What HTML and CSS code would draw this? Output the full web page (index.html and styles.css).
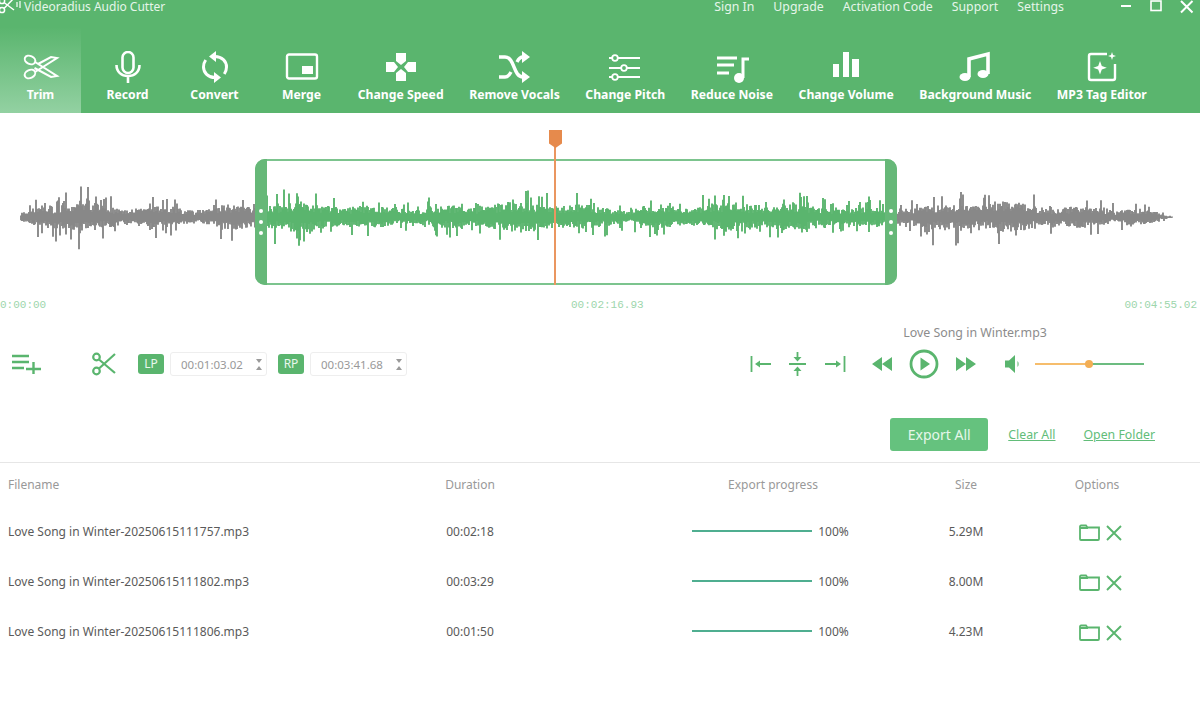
FILE: index.html
```html
<!DOCTYPE html>
<html lang="en">
<head>
  <meta charset="UTF-8">
  <title>Videoradius Audio Cutter</title>
  <link rel="stylesheet" href="styles.css">
</head>
<body>

<header class="header">
  <div class="titlebar">
    <div class="brand">
      <svg class="brand-logo" width="21" height="18" viewBox="0 0 21 18" fill="none" stroke="#fff" stroke-width="1.5">
        <circle cx="2" cy="4" r="2.6"/>
        <circle cx="2" cy="13" r="2.6"/>
        <path d="M4 5.5 14 13M4 11.5 14 1"/>
        <path d="M17 5v5M20 4v7" stroke-width="1.2"/>
      </svg>
      <span>Videoradius Audio Cutter</span>
    </div>
    <nav class="topnav">
      <a>Sign In</a>
      <a>Upgrade</a>
      <a>Activation Code</a>
      <a>Support</a>
      <a>Settings</a>
    </nav>
    <div class="winbtns">
      <svg width="12" height="12" viewBox="0 0 12 12" stroke="#fff" stroke-width="2" fill="none"><path d="M1 6h10"/></svg>
      <svg width="12" height="12" viewBox="0 0 12 12" stroke="#fff" stroke-width="1.6" fill="none"><rect x="1" y="1" width="10" height="9.5"/></svg>
      <svg width="14" height="14" viewBox="0 0 14 14" stroke="#fff" stroke-width="2" fill="none"><path d="M1 1l11.500 11.500M12.500 1 1 12.500"/></svg>
    </div>
  </div>

  <div class="tabs">
    <div class="tab active">
      <svg width="38" height="32" viewBox="0 0 38 32" fill="none" stroke="#fff" stroke-width="2">
        <ellipse cx="8" cy="9" rx="5.500" ry="4" transform="rotate(25 8 9)"/>
        <ellipse cx="8" cy="23" rx="5.500" ry="4" transform="rotate(-25 8 23)"/>
        <path d="M13 11 35 25 29 26 12.500 17M13 21 35 7 29 6 16 13"/>
      </svg>
      <span>Trim</span>
    </div>
    <div class="tab">
      <svg width="38" height="32" viewBox="0 0 38 32" fill="none" stroke="#fff" stroke-width="2.600">
        <rect x="13.500" y="1" width="11" height="21" rx="5.500"/>
        <path d="M7.500 14c0 7 5 11 11.500 11s11.500-4 11.500-11M19 25v7"/>
      </svg>
      <span>Record</span>
    </div>
    <div class="tab">
      <svg width="38" height="32" viewBox="0 0 38 32" fill="none" stroke="#fff" stroke-width="3">
        <path d="M19 5.500c7 0 11.500 5 11.500 10.500 0 2.500-.8 5-2.200 7M19 26.500c-7 0-11.500-5-11.500-10.500 0-2.500.8-5 2.200-7"/>
        <path d="M20 0v11l-7-5.500zM18 21v11l7-5.500z" fill="#fff" stroke="none"/>
      </svg>
      <span>Convert</span>
    </div>
    <div class="tab">
      <svg width="38" height="32" viewBox="0 0 38 32" fill="none" stroke="#fff" stroke-width="2.400">
        <rect x="4" y="3.500" width="30" height="24" rx="2"/>
        <rect x="19" y="15" width="11" height="8" fill="#fff" stroke="none"/>
      </svg>
      <span>Merge</span>
    </div>
    <div class="tab">
      <svg width="38" height="32" viewBox="0 0 38 32" fill="#fff">
        <path d="M14 2h10v8l-5 4-5-4zM14 30h10v-8l-5-4-5 4zM4 11h8l4 5-4 5H4zM34 11h-8l-4 5 4 5h8z"/>
      </svg>
      <span>Change Speed</span>
    </div>
    <div class="tab">
      <svg width="38" height="32" viewBox="0 0 38 32" fill="none" stroke="#fff" stroke-width="3.400">
        <path d="M4 6h6c5 0 7 5 9 10s4 10 9 10h1M4 26h6c3 0 4.500-2 6-5M22 11c1.500-3 3-5 6-5h1"/>
        <path d="M27 0l8 6-8 6zM27 20l8 6-8 6z" fill="#fff" stroke="none"/>
      </svg>
      <span>Remove Vocals</span>
    </div>
    <div class="tab">
      <svg width="38" height="32" viewBox="0 0 38 32" fill="none" stroke="#fff" stroke-width="1.800">
        <path d="M3 7h3M12 7h22M3 17h12M21 17h13M3 26h3M12 26h22"/>
        <circle cx="9" cy="7" r="2.800"/>
        <circle cx="18" cy="17" r="2.800"/>
        <circle cx="9" cy="26" r="2.800"/>
      </svg>
      <span>Change Pitch</span>
    </div>
    <div class="tab">
      <svg width="38" height="32" viewBox="0 0 38 32" fill="none" stroke="#fff" stroke-width="3">
        <path d="M4 7h20M4 14h17M4 22h12M30 27V8h6"/>
        <circle cx="26" cy="27" r="5" fill="#fff" stroke="none"/>
      </svg>
      <span>Reduce Noise</span>
    </div>
    <div class="tab">
      <svg width="38" height="32" viewBox="0 0 38 32" fill="#fff">
        <rect x="6" y="13" width="6" height="13"/>
        <rect x="16" y="1" width="6" height="25"/>
        <rect x="25" y="8" width="7" height="18"/>
      </svg>
      <span>Change Volume</span>
    </div>
    <div class="tab">
      <svg width="38" height="32" viewBox="0 0 38 32" fill="none" stroke="#fff" stroke-width="3.600">
        <path d="M13 26V8l19-5v20"/>
        <ellipse cx="9" cy="26" rx="5.500" ry="4" fill="#fff" stroke="none"/>
        <ellipse cx="27" cy="23" rx="5.500" ry="4" fill="#fff" stroke="none"/>
      </svg>
      <span>Background Music</span>
    </div>
    <div class="tab">
      <svg width="38" height="32" viewBox="0 0 38 32" fill="none" stroke="#fff" stroke-width="2.400">
        <path d="M24 3H8a2 2 0 0 0-2 2v22a2 2 0 0 0 2 2h22a2 2 0 0 0 2-2V13"/>
        <path d="M17 10l1.800 5 5 1.800-5 1.800-1.800 5-1.800-5-5-1.800 5-1.800zM29 1l1 3 3 1-3 1-1 3-1-3-3-1 3-1z" fill="#fff" stroke="none"/>
      </svg>
      <span>MP3 Tag Editor</span>
    </div>
  </div>
</header>

<section class="wave-panel">
  <svg class="wave" id="wave" width="1200" height="180" viewBox="0 0 1200 180"></svg>
  <div class="selection">
    <div class="handle handle-left"><i></i><i></i><i></i></div>
    <div class="handle handle-right"><i></i><i></i><i></i></div>
  </div>
  <div class="playhead"></div>
  <div class="timeline">
    <span>0:00:00</span>
    <span>00:02:16.93</span>
    <span>00:04:55.02</span>
  </div>
</section>

<section class="controls">
  <div class="left-tools">
    <svg class="add-list" width="30" height="20" viewBox="0 0 30 20" fill="none" stroke="#5ab56e" stroke-width="2.400">
      <path d="M0 2h17M0 8h17M0 14h12M14 15h15M21.500 8v12"/>
    </svg>
    <svg class="cut" width="24" height="24" viewBox="0 0 24 24" fill="none" stroke="#5ab56e" stroke-width="2.200">
      <circle cx="4.500" cy="5" r="3.300"/>
      <circle cx="4.500" cy="19" r="3.300"/>
      <path d="M7 7.500 23 21M7 16.500 23 2"/>
    </svg>
    <span class="badge">LP</span>
    <div class="time-input">00:01:03.02<span class="spin"></span></div>
    <span class="badge badge-right">RP</span>
    <div class="time-input">00:03:41.68<span class="spin"></span></div>
  </div>

  <div class="player">
    <div class="song">Love Song in Winter.mp3</div>
    <div class="player-btns">
      <svg width="22" height="18" viewBox="0 0 22 18" fill="none" stroke="#5ab56e" stroke-width="1.800">
        <path d="M1.500 1v16M7 9h14"/><path d="M5 9l5-3.500v7z" fill="#5ab56e" stroke="none"/>
      </svg>
      <svg class="gap-s" width="18" height="26" viewBox="0 0 18 26" fill="none" stroke="#5ab56e" stroke-width="1.800">
        <path d="M0 13h17M8.500 1v6M8.500 19v6"/><path d="M4.500 6h8l-4 4.500zM4.500 20h8l-4-4.500z" fill="#5ab56e" stroke="none"/>
      </svg>
      <svg class="gap-s" width="22" height="18" viewBox="0 0 22 18" fill="none" stroke="#5ab56e" stroke-width="1.800">
        <path d="M20.500 1v16M1 9h14"/><path d="M17 9l-5-3.500v7z" fill="#5ab56e" stroke="none"/>
      </svg>
      <svg class="gap-l" width="20" height="14" viewBox="0 0 20 14" fill="#5ab56e">
        <path d="M10 0v14L0 7zM20 0v14L10 7z"/>
      </svg>
      <svg class="gap-m" width="30" height="30" viewBox="0 0 30 30" fill="none" stroke="#5ab56e" stroke-width="2.800">
        <circle cx="15" cy="15" r="13"/><path d="M11.500 8.500v13L21 15z" fill="#5ab56e" stroke="none"/>
      </svg>
      <svg class="gap-m" width="20" height="14" viewBox="0 0 20 14" fill="#5ab56e">
        <path d="M0 0v14l10-7zM10 0v14l10-7z"/>
      </svg>
      <svg class="gap-xl" width="16" height="18" viewBox="0 0 16 18" fill="#5ab56e">
        <path d="M0 5.500h4L10 0v18l-6-5.500H0z"/><path d="M12.500 6c1.500 1.500 1.500 4.500 0 6z" />
      </svg>
      <div class="volume"><div class="volume-fill"></div><div class="volume-knob"></div></div>
    </div>
  </div>
</section>

<section class="actions">
  <button class="export">Export All</button>
  <a class="link">Clear All</a>
  <a class="link">Open Folder</a>
</section>

<section class="list">
  <div class="row row-head">
    <div>Filename</div>
    <div class="center">Duration</div>
    <div class="center">Export progress</div>
    <div class="center">Size</div>
    <div class="center">Options</div>
  </div>

  <div class="row">
    <div>Love Song in Winter-20250615111757.mp3</div>
    <div class="center">00:02:18</div>
    <div class="progress"><div class="bar"></div><span>100%</span></div>
    <div class="center">5.29M</div>
    <div class="options">
      <svg width="21" height="17" viewBox="0 0 21 17" fill="none" stroke="#5ab56e" stroke-width="1.800"><path d="M1 15V2.500a1 1 0 0 1 1-1h5l1.500 2H20V15a1 1 0 0 1-1 1H2a1 1 0 0 1-1-1zM1 4h8"/></svg>
      <svg width="16" height="16" viewBox="0 0 16 16" fill="none" stroke="#5ab56e" stroke-width="1.900"><path d="M1 1l14 14M15 1 1 15"/></svg>
    </div>
  </div>

  <div class="row">
    <div>Love Song in Winter-20250615111802.mp3</div>
    <div class="center">00:03:29</div>
    <div class="progress"><div class="bar"></div><span>100%</span></div>
    <div class="center">8.00M</div>
    <div class="options">
      <svg width="21" height="17" viewBox="0 0 21 17" fill="none" stroke="#5ab56e" stroke-width="1.800"><path d="M1 15V2.500a1 1 0 0 1 1-1h5l1.500 2H20V15a1 1 0 0 1-1 1H2a1 1 0 0 1-1-1zM1 4h8"/></svg>
      <svg width="16" height="16" viewBox="0 0 16 16" fill="none" stroke="#5ab56e" stroke-width="1.900"><path d="M1 1l14 14M15 1 1 15"/></svg>
    </div>
  </div>

  <div class="row">
    <div>Love Song in Winter-20250615111806.mp3</div>
    <div class="center">00:01:50</div>
    <div class="progress"><div class="bar"></div><span>100%</span></div>
    <div class="center">4.23M</div>
    <div class="options">
      <svg width="21" height="17" viewBox="0 0 21 17" fill="none" stroke="#5ab56e" stroke-width="1.800"><path d="M1 15V2.500a1 1 0 0 1 1-1h5l1.500 2H20V15a1 1 0 0 1-1 1H2a1 1 0 0 1-1-1zM1 4h8"/></svg>
      <svg width="16" height="16" viewBox="0 0 16 16" fill="none" stroke="#5ab56e" stroke-width="1.900"><path d="M1 1l14 14M15 1 1 15"/></svg>
    </div>
  </div>
</section>

<script src="waveform.js"></script>
</body>
</html>
```

FILE: styles.css
```css
* {
  box-sizing: border-box;
}

html, body {
  margin: 0;
  height: 715px;
  overflow: hidden;
}

body {
  background: #fff;
  color: #5a5a5a;
  font-family: "Noto Sans", "Open Sans", sans-serif;
  font-size: 12px;
}

/* header */
.header {
  height: 113px;
  background: #5ab56e;
  color: #fff;
}

.titlebar {
  display: flex;
  height: 27px;
  line-height: 13px;
}

.brand {
  display: flex;
  align-items: flex-start;
  flex: 1;
  font-size: 12px;
  color: #e6f5ea;
}

.brand-logo {
  margin-top: -3px;
  margin-right: 3px;
}

.topnav {
  display: flex;
  gap: 19px;
  font-size: 12.3px;
  color: #e6f5ea;
}

.winbtns {
  display: flex;
  align-items: flex-start;
  gap: 18px;
  width: 136px;
  padding-left: 56px;
}

.tabs {
  display: flex;
  height: 86px;
}

.tab {
  display: flex;
  flex-direction: column;
  align-items: center;
  min-width: 87px;
  padding: 24px 12.8px 0;
  font-size: 12.2px;
  font-weight: 700;
  white-space: nowrap;
}

.tab span {
  margin-top: 3px;
  line-height: 17px;
}

.tab.active {
  width: 81px;
  min-width: 81px;
  margin-right: 3px;
  background: linear-gradient(to bottom, #5ab56e, #93d1a2);
}

/* waveform */
.wave-panel {
  position: relative;
  height: 200px;
}

.wave {
  display: block;
  position: absolute;
  left: 0;
  top: 10px;
}

.selection {
  position: absolute;
  left: 255px;
  top: 46px;
  width: 642px;
  height: 126px;
  border: 2px solid #7cc48e;
  border-radius: 10px;
}

.handle {
  position: absolute;
  top: -2px;
  bottom: -2px;
  width: 12px;
  background: #66b878;
  display: flex;
  flex-direction: column;
  align-items: center;
  justify-content: center;
  gap: 7px;
}

.handle i {
  width: 4px;
  height: 4px;
  border-radius: 50%;
  background: #fff;
}

.handle-left {
  left: -2px;
  border-radius: 10px 0 0 10px;
}

.handle-right {
  right: -2px;
  border-radius: 0 10px 10px 0;
}

.playhead {
  position: absolute;
  left: 554px;
  top: 34px;
  width: 2px;
  height: 138px;
  background: #ea9660;
}

.playhead::before {
  content: "";
  position: absolute;
  left: -5px;
  top: -17px;
  width: 13px;
  height: 18px;
  background: #e68a4c;
  clip-path: polygon(0 0, 100% 0, 100% 75%, 50% 100%, 0 75%);
}

.timeline {
  position: absolute;
  left: 0;
  right: 3px;
  bottom: 1px;
  display: flex;
  justify-content: space-between;
  font-family: "Liberation Mono", monospace;
  font-size: 11px;
  line-height: 14px;
  color: #9dd6ac;
}

.timeline span:nth-child(2) {
  margin-left: 44px;
}

/* controls */
.controls {
  display: flex;
  justify-content: space-between;
  height: 90px;
  padding: 13px 56px 0 12px;
}

.left-tools {
  display: flex;
  align-items: center;
  height: 76px;
}

.cut {
  margin-left: 50px;
  margin-right: 22px;
}

.badge {
  width: 26px;
  height: 20px;
  border-radius: 3px;
  background: #5ab56e;
  color: #e9f7ed;
  font-size: 12px;
  line-height: 20px;
  text-align: center;
}

.badge-right {
  margin-left: 11px;
}

.time-input {
  position: relative;
  width: 97px;
  height: 24px;
  margin-left: 6px;
  padding-left: 10px;
  border: 1px solid #eee;
  border-radius: 3px;
  color: #999;
  font-size: 11.5px;
  line-height: 23px;
}

.spin {
  position: absolute;
  right: 4px;
  top: 6px;
  width: 0;
  height: 11px;
  border-left: 3px solid transparent;
  border-right: 3px solid transparent;
  border-top: 4px solid #9a9a9a;
  border-bottom: 4px solid #9a9a9a;
}

.player {
  display: flex;
  flex-direction: column;
  width: 394px;
}

.song {
  padding-left: 56px;
  text-align: center;
  font-size: 12.4px;
  line-height: 14px;
  color: #8c8c8c;
  white-space: nowrap;
}

.player-btns {
  display: flex;
  align-items: center;
  height: 30px;
  margin-top: 9px;
}

.gap-s {
  margin-left: 17px;
}

.gap-m {
  margin-left: 17px;
}

.gap-l {
  margin-left: 26px;
}

.gap-xl {
  margin-left: 29px;
}

.volume {
  position: relative;
  width: 109px;
  height: 2px;
  margin-left: 14px;
  background: #6cbc80;
}

.volume-fill {
  width: 54px;
  height: 2px;
  background: #f6bd6c;
}

.volume-knob {
  position: absolute;
  left: 50px;
  top: -3px;
  width: 8px;
  height: 8px;
  border-radius: 50%;
  background: #f3ae55;
}

/* export actions */
.actions {
  display: flex;
  align-items: center;
  justify-content: flex-end;
  height: 33px;
  margin-top: 15px;
  padding-right: 45px;
}

.export {
  width: 98px;
  height: 33px;
  margin-right: 20px;
  border: none;
  border-radius: 3px;
  background: #65c27e;
  color: #e6f7ea;
  font-family: inherit;
  font-size: 14px;
}

.link {
  margin-right: 28px;
  color: #62bd79;
  text-decoration: underline;
  font-size: 12.3px;
}

.link:last-child {
  margin-right: 0;
}

/* file list */
.list {
  margin-top: 11px;
  padding-left: 8px;
  border-top: 1px solid #e6e6e6;
}

.row {
  display: grid;
  grid-template-columns: 292px 340px 266px 120px 142px;
  align-items: center;
  height: 50px;
  white-space: nowrap;
}

.row-head {
  height: 43px;
  color: #999;
}

.center {
  text-align: center;
}

.progress {
  display: flex;
  align-items: center;
  justify-content: center;
  gap: 6px;
  padding-right: 5px;
}

.bar {
  width: 120px;
  height: 2px;
  background: #4fae90;
}

.options {
  display: flex;
  align-items: center;
  justify-content: center;
  gap: 6px;
  padding-left: 6px;
  padding-top: 3px;
}
```

FILE: waveform.js
```js
// draws the audio wave, one bar per pixel, same shape on every load
const svg = document.getElementById('wave');
const CENTER = 94;
const START = 21;
const END = 1172;
const SEL_LEFT = 255;
const SEL_RIGHT = 897;

let seed = 4711;
function rnd() {
  seed = (seed * 16807) % 2147483647;
  return seed / 2147483647;
}

function envelope(x) {
  let e = 0.85 + 0.2 * Math.sin(x / 37) + 0.15 * Math.sin(x / 11.3);
  if (x < 50) e *= (x - START) / 30 * 0.7 + 0.3;
  if (x > 1130) e *= Math.max(0.1, (END - x) / 42);
  return e;
}

let grey = '';
let green = '';
for (let x = START; x <= END; x += 1) {
  const e = envelope(x);
  let up = (4 + rnd() * 9) * e;
  let down = (4 + rnd() * 9) * e;
  if (rnd() < 0.18) up += rnd() * 17 * e;
  if (rnd() < 0.16) down += rnd() * 17 * e;
  const bar = 'M' + x + ' ' + (CENTER - up).toFixed(1) + 'V' + (CENTER + down).toFixed(1);
  if (x > SEL_LEFT && x < SEL_RIGHT) {
    green += bar;
  } else {
    grey += bar;
  }
}

svg.innerHTML =
  '<path d="' + grey + '" stroke="#888" stroke-width="1.9" fill="none"/>' +
  '<path d="' + green + '" stroke="#5ab56e" stroke-width="1.9" fill="none"/>';
```
